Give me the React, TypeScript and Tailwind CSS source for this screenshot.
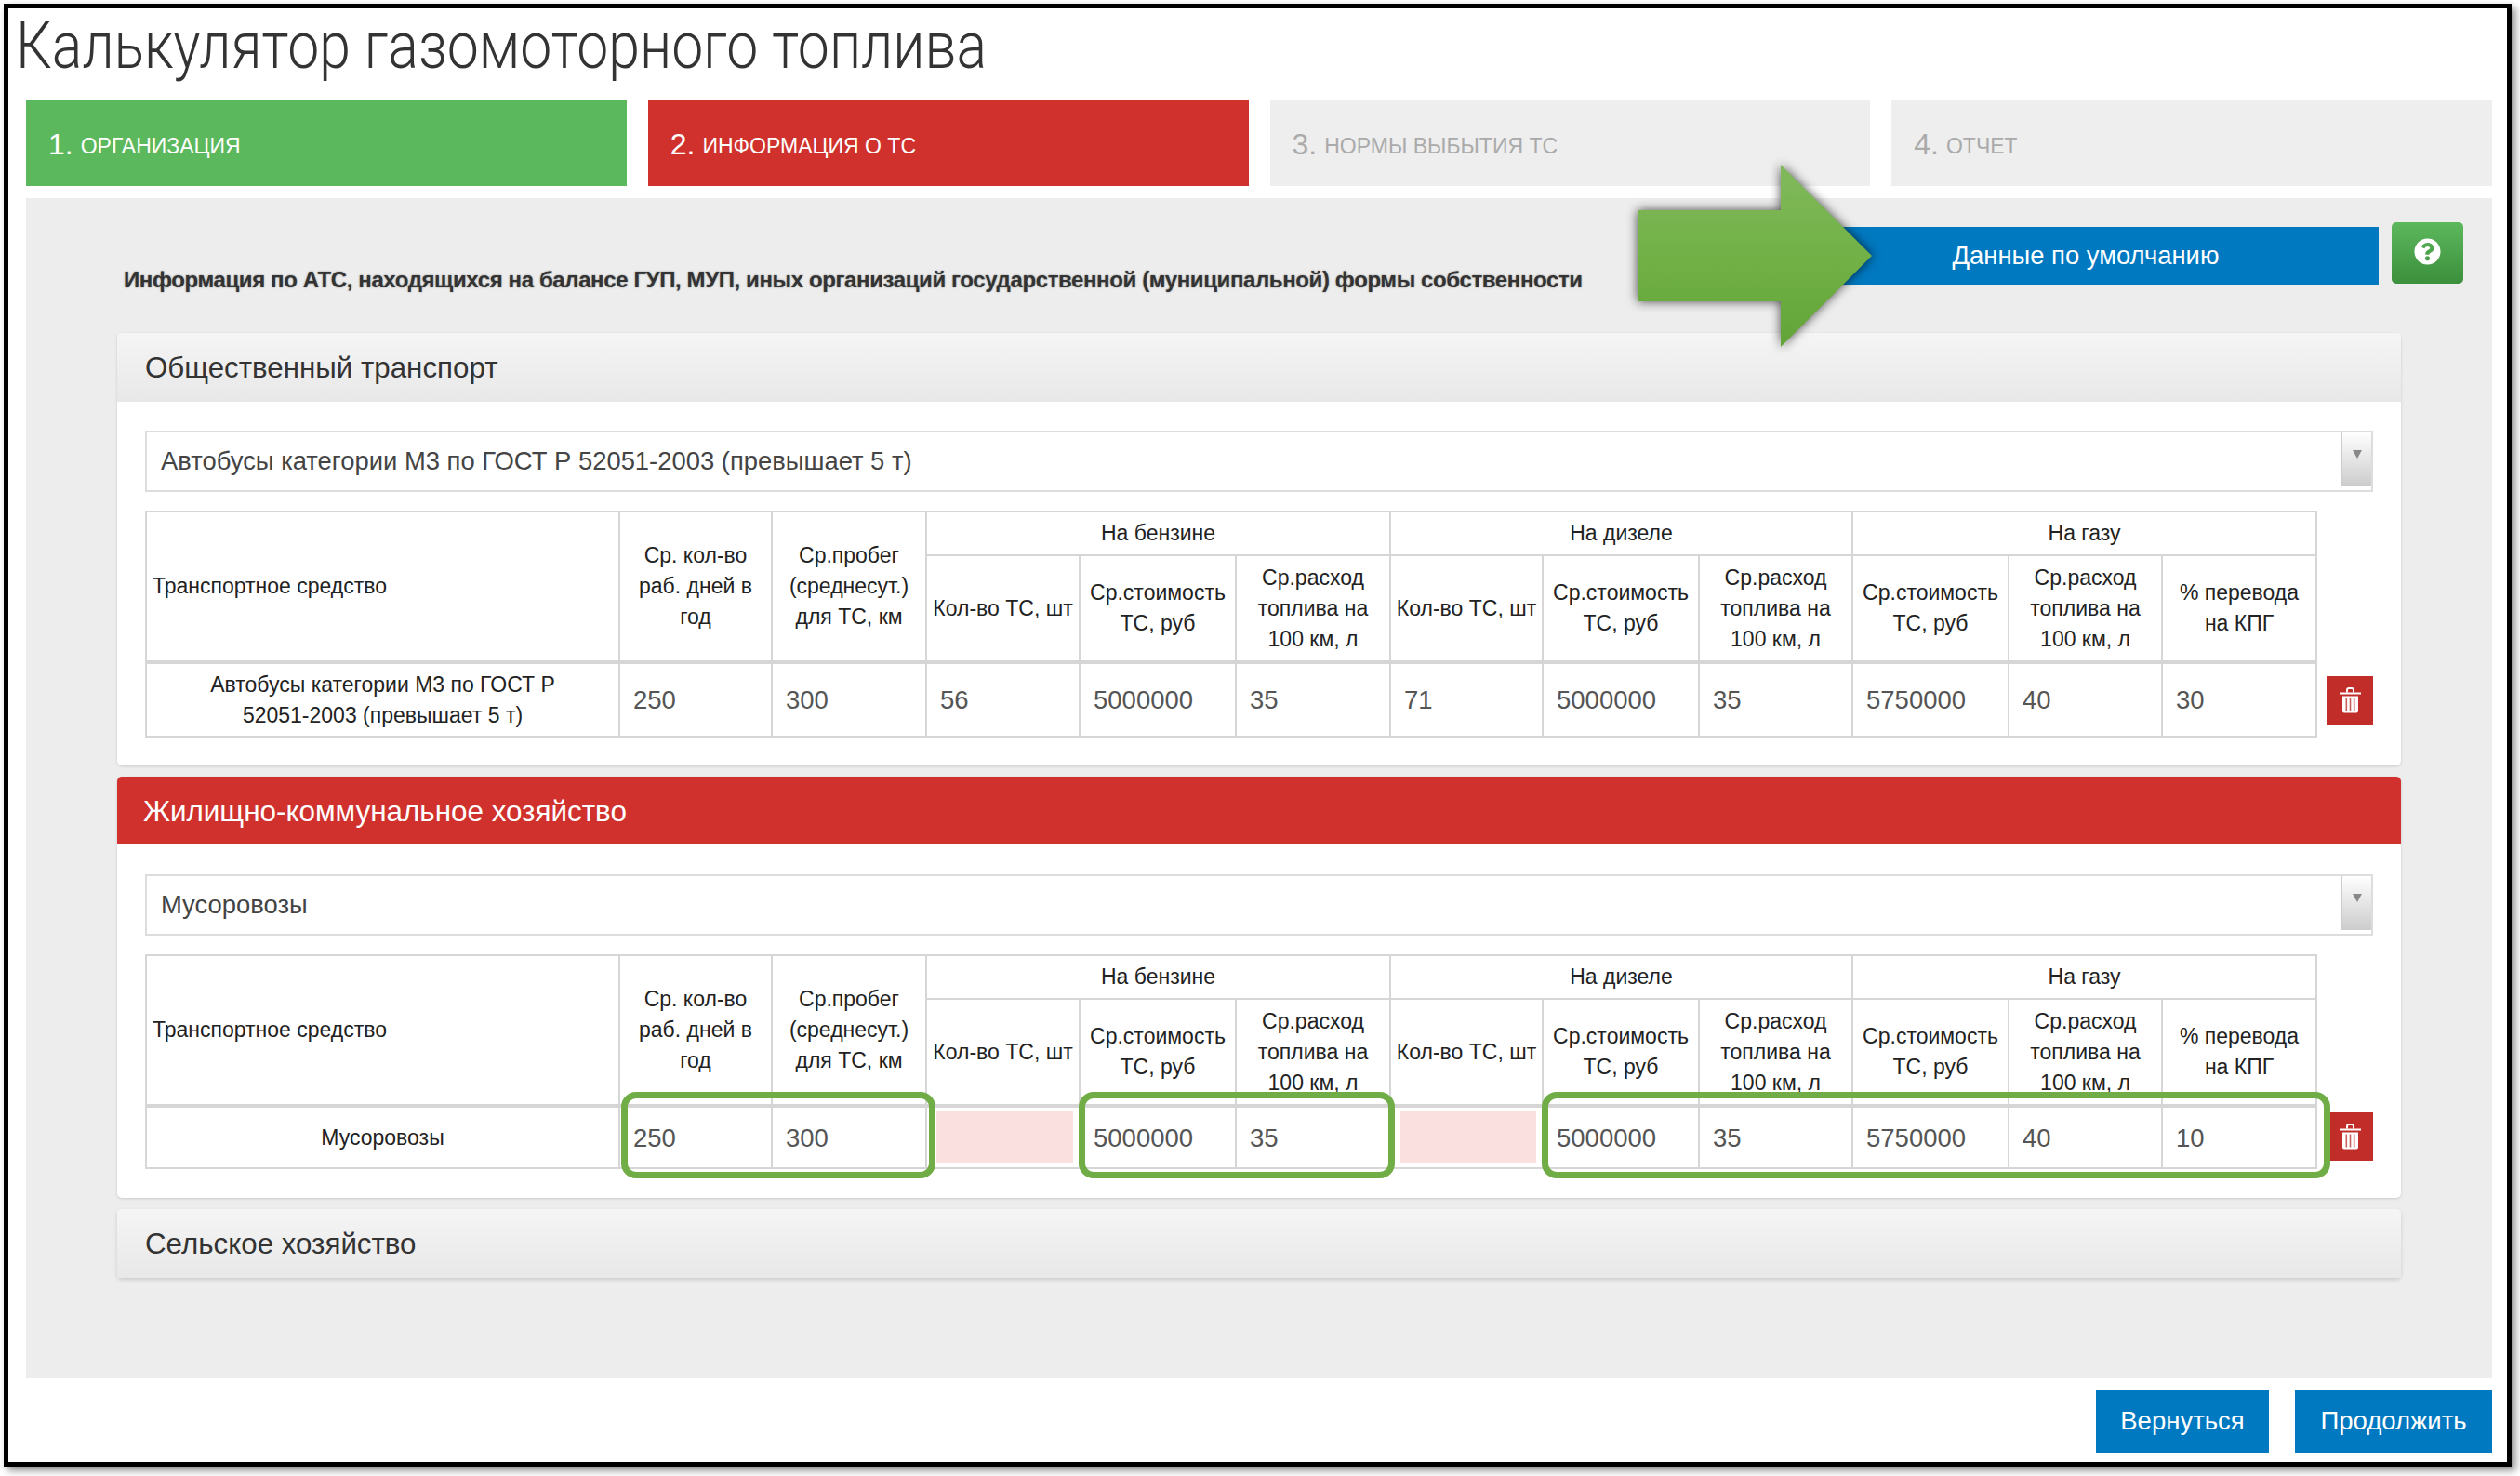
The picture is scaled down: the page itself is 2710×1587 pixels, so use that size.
import { FaQuestionCircle } from "react-icons/fa";

const FONT = "font-['Liberation_Sans',Arial,sans-serif]";

const steps = [
  { num: "1.", label: "ОРГАНИЗАЦИЯ", box: "bg-[#5cb85c] text-white" },
  { num: "2.", label: "ИНФОРМАЦИЯ О ТС", box: "bg-[#d0312d] text-white" },
  { num: "3.", label: "НОРМЫ ВЫБЫТИЯ ТС", box: "bg-[#eeeeee] text-[#aaaaaa]" },
  { num: "4.", label: "ОТЧЕТ", box: "bg-[#eeeeee] text-[#aaaaaa]" },
];

const colClasses = [
  "w-[509px]",
  "w-[164px]",
  "w-[166px]",
  "w-[165px]",
  "w-[168px]",
  "w-[166px]",
  "w-[164px]",
  "w-[168px]",
  "w-[165px]",
  "w-[168px]",
  "w-[165px]",
  "w-[166px]",
];

const borderCell = "border-2 border-[#d6d6d6]";
const headCell = `${borderCell} px-[2px] text-center align-middle font-normal`;

const TrashIcon = () => (
  <svg width="23" height="28" viewBox="0 0 23 28">
    <path d="M0 5.5h23v2H0z" fill="#ffffff" />
    <path d="M8 5.5V3a2 2 0 0 1 2-2h3a2 2 0 0 1 2 2v2.5" fill="none" stroke="#ffffff" strokeWidth="2" />
    <path d="M3 9.5h17v16a2 2 0 0 1-2 2H5a2 2 0 0 1-2-2z" fill="#ffffff" />
    <path d="M6.5 11.5h1.6v14H6.5zM10.7 11.5h1.6v14h-1.6zM14.9 11.5h1.6v14h-1.6z" fill="#c9605c" />
  </svg>
);

type RowProps = {
  name: string;
  values: string[];
  bodyHeight: string;
  btnMargin: string;
  highlight?: boolean;
};

// таблица с данными одной категории ТС
const VehicleTable = ({ name, values, bodyHeight, btnMargin, highlight }: RowProps) => {
  return (
    <div className="relative flex items-end gap-[10px]">
      <table className="w-[2334px] table-fixed border-collapse text-[23px] leading-[33px] text-[#222222]">
        <colgroup>
          {colClasses.map((c, i) => (
            <col key={i} className={c} />
          ))}
        </colgroup>
        <thead>
          <tr className="h-[47px]">
            <th rowSpan={2} className={`${borderCell} pl-[6px] text-left align-middle font-normal`}>
              Транспортное средство
            </th>
            <th rowSpan={2} className={headCell}>
              Ср. кол-во раб. дней в год
            </th>
            <th rowSpan={2} className={headCell}>
              Ср.пробег (среднесут.) для ТС, км
            </th>
            <th colSpan={3} className={headCell}>
              На бензине
            </th>
            <th colSpan={3} className={headCell}>
              На дизеле
            </th>
            <th colSpan={3} className={headCell}>
              На газу
            </th>
          </tr>
          <tr className="h-[115px]">
            <th className={headCell}>Кол-во ТС, шт</th>
            <th className={headCell}>Ср.стоимость ТС, руб</th>
            <th className={headCell}>Ср.расход топлива на 100 км, л</th>
            <th className={headCell}>Кол-во ТС, шт</th>
            <th className={headCell}>Ср.стоимость ТС, руб</th>
            <th className={headCell}>Ср.расход топлива на 100 км, л</th>
            <th className={headCell}>Ср.стоимость ТС, руб</th>
            <th className={headCell}>Ср.расход топлива на 100 км, л</th>
            <th className={headCell}>
              % перевода
              <br />
              на КПГ
            </th>
          </tr>
        </thead>
        <tbody>
          <tr className={`${bodyHeight} border-t-4 border-[#d6d6d6]`}>
            <td className={`${borderCell} px-[50px] text-center`}>{name}</td>
            {values.map((v, i) => (
              <td key={i} className={`${borderCell} px-[14px] text-[27.5px] text-[#555555]`}>
                {v === "" ? <div className="-ml-[4px] -mr-[8px] -mt-[2px] h-[55px] bg-[#fbe0e0]" /> : v}
              </td>
            ))}
          </tr>
        </tbody>
      </table>
      <button className={`flex h-[52px] w-[52px] items-center justify-center bg-[#c12e2a] ${btnMargin}`}>
        <TrashIcon />
      </button>
      {highlight && (
        <>
          <div className="absolute left-[512px] top-[148px] h-[93px] w-[338px] rounded-[16px] border-[7px] border-[#70ad47]" />
          <div className="absolute left-[1004px] top-[148px] h-[93px] w-[340px] rounded-[16px] border-[7px] border-[#70ad47]" />
          <div className="absolute left-[1502px] top-[148px] h-[93px] w-[848px] rounded-[16px] border-[7px] border-[#70ad47]" />
        </>
      )}
    </div>
  );
};

const SelectBox = ({ text }: { text: string }) => (
  <div className="mb-[20px] flex h-[66px] items-stretch border-2 border-[#dddddd] bg-white">
    <div className="flex flex-1 items-center pl-[15px] text-[27.4px] text-[#444444]">{text}</div>
    <div className="mb-[4px] flex w-[33px] justify-center border-l-2 border-[#cccccc] bg-gradient-to-b from-white to-[#cccccc] pt-[19px]">
      <div className="h-0 w-0 border-x-[5px] border-t-[9px] border-x-transparent border-t-[#888888]" />
    </div>
  </div>
);

const CardHeader = ({ title, red }: { title: string; red?: boolean }) => (
  <div
    className={
      red
        ? "flex h-[73px] items-center rounded-t-[5px] bg-[#d0312d] pl-[28px] pt-[2px] text-[31.4px] text-white"
        : "flex h-[74px] items-center rounded-t-[5px] bg-gradient-to-b from-[#f5f5f5] to-[#e8e8e8] pl-[30px] pt-[2px] text-[31.3px] text-[#333333]"
    }
  >
    {title}
  </div>
);

const App = () => {
  return (
    <div className={`h-[1587px] w-[2710px] bg-white pl-[4px] pt-[4px] ${FONT}`}>
      <div className="h-[1573px] w-[2697px] border-[5px] border-black bg-white shadow-[4px_4px_8px_rgba(0,0,0,0.45)]">
        <div className="flex h-[98px] items-center pb-[18px] pl-[8px] font-['Roboto',sans-serif] text-[70px] font-light text-[#333333]">
          <span className="origin-left scale-x-[0.868] whitespace-nowrap">Калькулятор газомоторного топлива</span>
        </div>

        <div className="ml-[19px] grid w-[2652px] grid-cols-4 gap-[23px]">
          {steps.map((s) => (
            <div key={s.num} className={`flex h-[93px] items-center pl-[24px] pt-[2px] ${s.box}`}>
              <span className="text-[32px]">{s.num}</span>
              <span className="ml-[8px] mt-[5px] text-[23px]">{s.label}</span>
            </div>
          ))}
        </div>

        <div className="relative ml-[19px] mt-[13px] h-[1269px] w-[2652px] bg-[#ededed]">
          <div className="flex h-[145px] items-start">
            <div className="mt-[70px] flex-1 pl-[105px] text-[24px] font-bold leading-[36px] tracking-[-0.39px] text-[#333333] [text-shadow:0_0_2px_#888888]">
              Информация по АТС, находящихся на балансе ГУП, МУП, иных организаций государственной (муниципальной) формы собственности
            </div>
            <button className="mt-[31px] h-[62px] w-[630px] shrink-0 bg-[#0079c1] text-[27.4px] text-white">
              Данные по умолчанию
            </button>
            <button className="ml-[14px] mr-[31px] mt-[26px] flex h-[66px] w-[77px] shrink-0 items-center justify-center rounded-[5px] bg-gradient-to-b from-[#5cb85c] to-[#3c8f3c] pb-[4px] text-white">
              <FaQuestionCircle size={29} />
            </button>
          </div>

          <div className="flex flex-col gap-[12px] pl-[98px] pr-[98px]">
            <div className="rounded-[5px] bg-white shadow-[0_1px_3px_rgba(0,0,0,0.15)]">
              <CardHeader title="Общественный транспорт" />
              <div className="px-[30px] pb-[30px] pt-[31px]">
                <SelectBox text="Автобусы категории М3 по ГОСТ Р 52051-2003 (превышает 5 т)" />
                <VehicleTable
                  name="Автобусы категории М3 по ГОСТ Р 52051-2003 (превышает 5 т)"
                  values={["250", "300", "56", "5000000", "35", "71", "5000000", "35", "5750000", "40", "30"]}
                  bodyHeight="h-[80px]"
                  btnMargin="mb-[14px]"
                />
              </div>
            </div>

            <div className="rounded-[5px] bg-white shadow-[0_1px_3px_rgba(0,0,0,0.15)]">
              <CardHeader title="Жилищно-коммунальное хозяйство" red />
              <div className="px-[30px] pb-[31px] pt-[32px]">
                <SelectBox text="Мусоровозы" />
                <VehicleTable
                  name="Мусоровозы"
                  values={["250", "300", "", "5000000", "35", "", "5000000", "35", "5750000", "40", "10"]}
                  bodyHeight="h-[67px]"
                  btnMargin="mb-[9px]"
                  highlight
                />
              </div>
            </div>

            <div className="rounded-[5px] shadow-[0_2px_4px_rgba(0,0,0,0.15)]">
              <CardHeader title="Сельское хозяйство" />
            </div>
          </div>

          {/* стрелка поверх кнопки */}
          <svg
            className="absolute left-[1733px] top-[-36px] h-[196px] w-[252px] overflow-visible [filter:drop-shadow(0_0_6px_rgba(0,0,0,0.7))]"
            viewBox="0 0 252 196"
          >
            <defs>
              <linearGradient id="arrowFill" x1="0" y1="0" x2="0" y2="1">
                <stop offset="0" stopColor="#81b95c" />
                <stop offset="0.55" stopColor="#70b044" />
                <stop offset="1" stopColor="#62a437" />
              </linearGradient>
            </defs>
            <polygon points="0,49 154,49 154,0 252,98 154,196 154,147 0,147" fill="url(#arrowFill)" />
          </svg>
        </div>

        <div className="mr-[16px] mt-[12px] flex justify-end gap-[28px]">
          <button className="h-[68px] w-[186px] bg-[#0079c1] text-[27.5px] text-white">Вернуться</button>
          <button className="h-[68px] w-[212px] bg-[#0079c1] text-[27.5px] text-white">Продолжить</button>
        </div>
      </div>
    </div>
  );
};

export default App;
